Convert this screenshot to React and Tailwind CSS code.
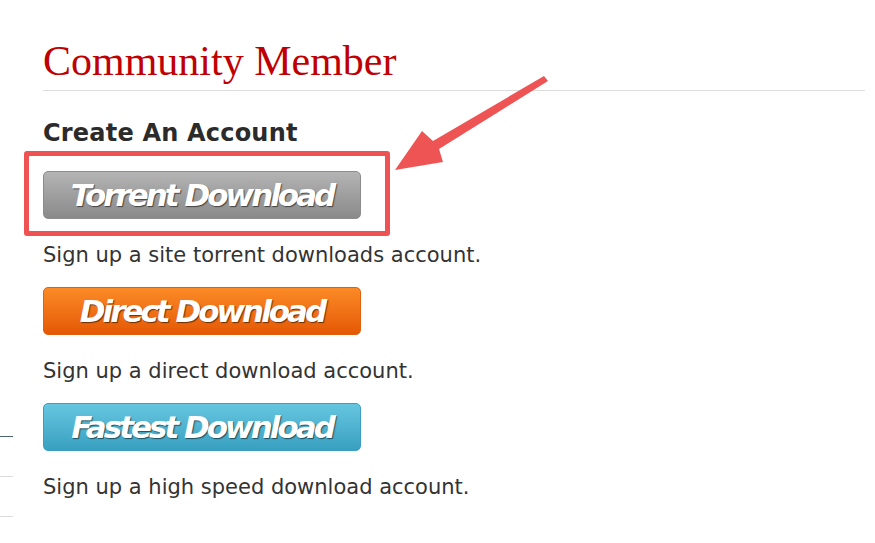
import React from "react";

const btnText =
  "font-['DejaVu_Sans',sans-serif] font-bold italic text-[31px] tracking-[-3px] text-white [text-shadow:1px_1px_1px_rgba(0,0,0,0.55)] leading-none";

function Block({ label, text, cls }) {
  return (
    <div>
      <div
        className={`w-[318px] h-[48px] rounded-[5px] flex items-center justify-center border ${cls}`}
      >
        <span className={btnText}>{label}</span>
      </div>
      <p className="mt-[24px] text-[21px] leading-[24px] text-[#333] font-['DejaVu_Sans',sans-serif]">
        {text}
      </p>
    </div>
  );
}

export default function App() {
  return (
    <div className="relative w-[875px] h-[543px] bg-white overflow-hidden flex">
      <div className="w-[13px] shrink-0 pt-[436px]">
        <div className="h-[40px] border-t border-[#4a6470]" />
        <div className="h-[40px] border-t border-[#dcdcdc]" />
        <div className="h-[40px] border-t border-[#dcdcdc]" />
      </div>
      <div className="ml-[30px] flex-1 pr-[10px]">
        <h1 className="pt-[37px] text-[42px] leading-[48px] text-[#c00000] font-['Liberation_Serif',serif]">
          Community Member
        </h1>
        <div className="mt-[5px] h-px bg-[#dddddd]" />
        <h2 className="mt-[28px] text-[24px] leading-[28px] font-bold text-[#2b2b2b] font-['DejaVu_Sans',sans-serif] tracking-[0.2px]">
          Create An Account
        </h2>
        <div className="mt-[24px] flex flex-col gap-[20px]">
          <Block
            label="Torrent Download"
            text="Sign up a site torrent downloads account."
            cls="bg-gradient-to-b from-[#b4b4b4] to-[#8a8a8a] border-[#8c8c8c]"
          />
          <Block
            label="Direct Download"
            text="Sign up a direct download account."
            cls="bg-gradient-to-b from-[#fb8a25] to-[#e55803] border-[#e06010]"
          />
          <Block
            label="Fastest Download"
            text="Sign up a high speed download account."
            cls="bg-gradient-to-b from-[#66c6e0] to-[#38a0c0] border-[#3a9fbf]"
          />
        </div>
      </div>
      <div className="absolute left-[24px] top-[151px] w-[366px] h-[85px] border-[5px] border-[#ee5253] rounded-[3px]" />
      <svg className="absolute left-0 top-0" width="875" height="543">
        <polygon
          points="544,76 433,141 422,131 395,170 443,162 439,149 548,81"
          fill="#ef5455"
        />
      </svg>
    </div>
  );
}
